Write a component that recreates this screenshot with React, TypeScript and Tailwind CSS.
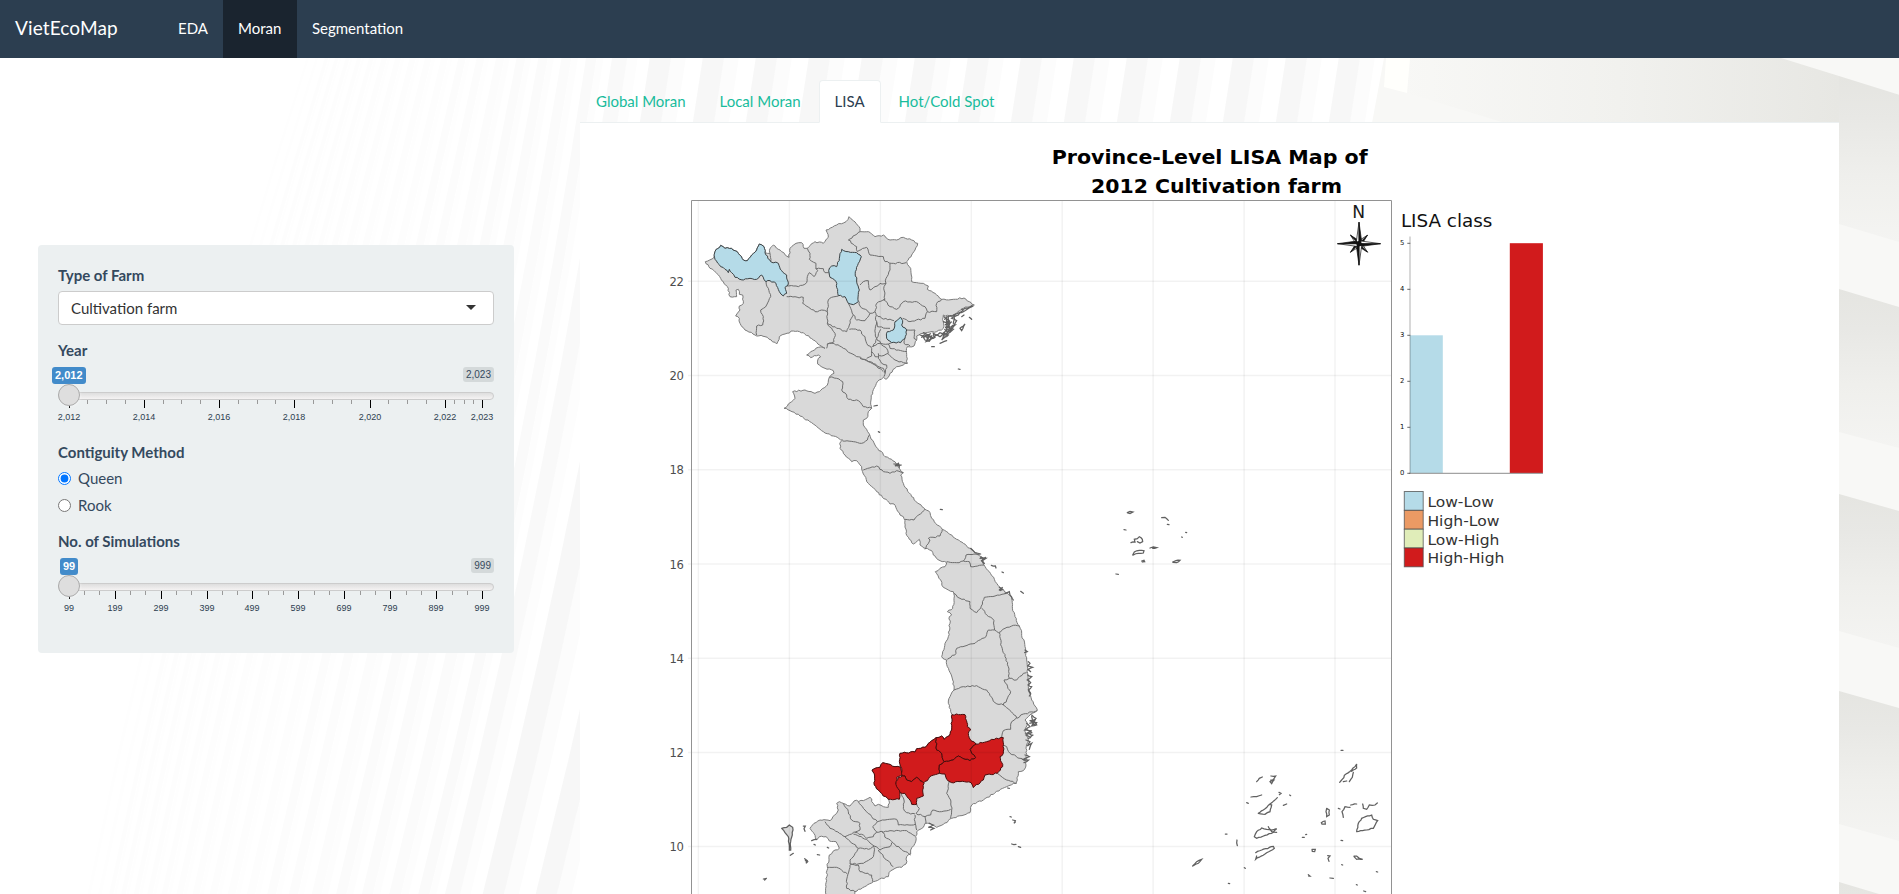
import React from "react";

type Pt = [number, number];

/* Each map sheet is digitised at three units per pixel from its own origin. */
const SHEETS: Record<string, Pt> = {
  A: [690, 200],
  B: [690, 340],
  C: [850, 500],
  D: [740, 690],
  E: [1080, 480],
};

const pts = (sheet: string, s: string): Pt[] => {
  const [ox, oy] = SHEETS[sheet];
  return s
    .trim()
    .split(/\s+/)
    .map((p) => {
      const [x, y] = p.split(",").map(Number);
      return [ox + x / 3, oy + y / 3] as Pt;
    });
};

const hash = (a: number, b: number) => {
  const v = Math.sin(a * 12.9898 + b * 78.233) * 43758.5453;
  return v - Math.floor(v) - 0.5;
};

/* Adds small natural wiggles; shared borders get identical wiggles. */
const rough = (list: Pt[], amp = 1.5): Pt[] => {
  const out: Pt[] = [];
  for (let i = 0; i < list.length - 1; i++) {
    let a = list[i];
    let b = list[i + 1];
    out.push(a);
    const flip = a[0] > b[0] || (a[0] === b[0] && a[1] > b[1]);
    if (flip) [a, b] = [b, a];
    const len = Math.hypot(b[0] - a[0], b[1] - a[1]);
    const n = Math.floor(len / 2);
    const mids: Pt[] = [];
    for (let k = 1; k < n; k++) {
      const t = k / n;
      const d = hash(a[0] + k, b[1] - k) * amp;
      mids.push([
        a[0] + (b[0] - a[0]) * t - ((b[1] - a[1]) / len) * d,
        a[1] + (b[1] - a[1]) * t + ((b[0] - a[0]) / len) * d,
      ]);
    }
    if (flip) mids.reverse();
    out.push(...mids);
  }
  out.push(list[list.length - 1]);
  return out;
};

const toPath = (list: Pt[], close = false) =>
  "M" + list.map((p) => p[0].toFixed(2) + " " + p[1].toFixed(2)).join("L") + (close ? "Z" : "");

const ring = (list: Pt[], amp?: number) => toPath(rough([...list, list[0]], amp), true);

const outline: Pt[] = [
  ...pts("A", "46,185 72,172 75,155 92,136 105,145 125,145 145,160 160,180 172,182 185,165 200,150 208,132 222,140 225,158 240,160 240,145 250,135 275,155 297,172 300,145 318,130 335,128 342,145 352,145 375,125 400,130 415,112 408,90 440,75 468,65 477,50 490,62 510,85 510,95 535,95 555,110 580,105 600,120 620,120 640,112 665,120 683,130 675,150 665,165 650,185 662,205 665,245 700,250 715,258 712,268 735,280 755,298 790,298 822,294 838,305 853,315 820,325 800,340 785,350 760,345 760,385 740,395 700,400 680,408 680,420 672,438 652,440 650,470 652,490 620,500 600,520 588,538"),
  ...pts("B", "580,112 562,125 548,155 543,180 545,205 535,215 530,235 520,240 520,255 533,275 541,290 555,315 585,350 605,358 622,375 630,388 640,398 632,405 640,430 665,470 705,508 720,518 725,535 757,568 800,598 845,628 860,640 875,650 882,675"),
  ...pts("C", "402,195 418,215 440,250 455,268 470,278 485,290 487,320 495,350 508,378 515,400 525,440 530,480 533,520 535,560 545,600 562,630"),
  ...pts("D", "870,75 855,90 862,105 855,125 865,150 858,175 860,205 858,225 850,242 835,245 832,270 828,280 800,290 765,308 730,330 695,345 690,368 635,385 610,403 590,412 570,400 555,400 550,412 530,425 525,460 512,480 512,492 500,500 498,522 485,532 465,535 447,548 445,560 400,575 345,605 330,640 256,640 258,590 262,530 268,495 285,480 298,475 288,455 268,453 258,440 238,440 228,450 222,430 210,415 222,400 240,390 270,392 290,370 295,360 290,340 298,335 330,348 342,333 370,332 390,322 400,340 405,348 415,343 430,350 445,352 447,332 443,325 430,318 415,300 403,285 404,258 396,240 405,235 420,232 428,218 445,222 465,230 482,232 480,190 525,186 530,176 555,172 575,152 590,143 605,138 612,148 628,137 635,120 636,74 632,65 625,40 630,20"),
  ...pts("C", "312,570 308,540 292,500 290,480 275,470 278,455 285,430 295,410 300,370 298,350 305,345 292,335 308,325 312,295 310,275 295,270 280,262 272,240 256,215 270,205 285,200 290,188 270,182 250,165 245,152 225,145 210,135 208,118 190,132 178,118 168,100 165,62"),
  ...pts("B", "640,530 630,525 612,492 600,492 560,455 535,430 520,402 515,380 500,362 485,365 465,345 450,325 452,305 458,300 430,288 400,275 370,252 330,228 300,212 282,205 305,185 315,175 308,155 345,150 375,160 388,155 412,135 418,112 432,100 430,92 405,85 383,72 385,55 392,50 385,45 362,53 350,45 362,35 385,22 400,22 405,25"),
  ...pts("A", "370,420 340,398 310,393 285,402 268,410 260,432 225,410 195,405 165,390 150,370 148,355 137,348 150,330 148,318 160,310 158,285 148,283 145,268 138,270 140,290 120,290 115,265 100,245 80,220 60,205"),
];

const borders: [string, string][] = [
  ["A", "228,245 235,265 242,290 230,315 220,325 212,330 220,350 218,375 200,378 200,405"],
  ["A", "240,160 242,185"],
  ["A", "290,258 325,260 350,248 352,230 358,218 372,230 383,212 378,205"],
  ["A", "352,145 360,160 358,178 378,190 378,207 400,206 405,218 416,218"],
  ["A", "290,290 340,292 338,310 360,325 375,335 395,330 412,335 415,320 415,300 425,292 445,288"],
  ["A", "412,335 412,370 435,400 432,425 412,432 410,445"],
  ["A", "412,370 440,385 470,395 478,375 480,362 490,345 480,320 475,310"],
  ["A", "490,345 500,360 525,362 540,340 510,318 508,305"],
  ["A", "540,340 555,335 560,310 585,298 582,260 588,250 570,250 540,270 535,242 520,245 510,255"],
  ["A", "555,335 560,365 556,400 560,415 550,440"],
  ["A", "478,388 510,390 515,402 525,410 530,430 545,445 545,468 530,475"],
  ["A", "412,432 432,430 460,445 500,470 530,480 555,495 580,515"],
  ["A", "510,475 540,485 580,505 585,520"],
  ["A", "580,298 600,320 620,328 640,305 680,305 705,320 712,335 705,355 660,365 638,355"],
  ["A", "712,335 740,335 740,310 755,298"],
  ["A", "560,345 575,355 612,362"],
  ["A", "560,365 562,380 600,385"],
  ["A", "572,388 560,415 572,430 595,432 605,428"],
  ["A", "650,390 675,390 672,415 680,420"],
  ["A", "645,415 642,430 660,438"],
  ["A", "595,432 600,445 625,450 650,455"],
  ["A", "545,440 570,430 590,445 595,460 575,468 555,470 545,455"],
  ["A", "595,462 615,480 640,488 652,490"],
  ["A", "565,460 565,475 575,490 590,495 582,530"],
  ["A", "510,95 475,120 500,140 502,155 530,142 540,165 580,170 585,185 610,190 648,188"],
  ["A", "600,190 600,210 588,235 588,250"],
  ["B", "418,112 440,115 458,125 455,150 470,165 475,178 505,182 520,200 545,205"],
  ["B", "458,303 490,305 515,310 532,300 538,285"],
  ["B", "520,390 560,378 580,395 600,400 620,392 640,398"],
  ["B", "645,538 672,540 685,525 705,508"],
  ["B", "705,628 720,600 715,595 750,588 757,568"],
  ["B", "770,665 800,668 820,663 838,665 842,680 882,675"],
  ["B", "820,663 828,645 870,642"],
  ["C", "312,280 330,295 360,305 360,325 380,338 392,325 403,292 435,288 470,280"],
  ["C", "395,325 410,345 432,362 434,390 415,390 408,410 375,430 345,438 320,445 318,460 292,478"],
  ["C", "434,390 445,398 465,385 490,376 508,378"],
  ["C", "448,398 455,440 465,470 475,500 478,535 462,540 465,548 482,575 470,600 460,615 435,608 410,570 380,557 340,560 312,570"],
  ["C", "478,535 500,540 520,520 530,518"],
  ["C", "460,615 480,632 498,648 500,655 520,642 562,632"],
  ["C", "498,655 485,665 482,688 460,692 455,712"],
  ["D", "790,165 800,170 810,190 840,205 858,212"],
  ["D", "772,250 800,270 830,280"],
  ["D", "615,258 628,275 620,310 632,330 635,360 632,385"],
  ["D", "530,343 538,355 528,370 555,380 572,375 578,360 605,365 632,358"],
  ["D", "555,380 558,400"],
  ["D", "525,375 525,395 530,420"],
  ["D", "482,305 492,330 490,355 500,368 525,372"],
  ["D", "355,335 375,360 395,380 412,395 435,390 470,388 475,405 520,405 528,402"],
  ["D", "310,340 325,365 335,390 360,400 360,420 335,432 315,440"],
  ["D", "255,395 270,415 315,440 355,475 385,478 402,468"],
  ["D", "412,395 398,410 410,425 400,440 380,445 370,435 345,428"],
  ["D", "410,427 450,422 500,422 525,438"],
  ["D", "425,425 440,445 460,460 480,475 512,495"],
  ["D", "340,432 380,448 402,468 420,480 450,470 455,458"],
  ["D", "402,472 400,500 370,520 330,522 330,510 350,485 355,475"],
  ["D", "415,480 440,510 460,530"],
  ["D", "330,522 355,525 360,545 395,555 398,575"],
  ["D", "262,532 290,532 322,552"],
  ["D", "330,525 322,560 320,595 345,605"],
];

const lowLow: [string, string][] = [
  ["A", "92,136 105,145 125,145 145,160 160,180 172,182 185,165 200,150 208,132 222,140 225,158 242,185 265,190 275,212 290,225 294,255 285,262 290,280 280,288 268,275 258,250 240,242 228,245 215,225 200,238 180,235 160,240 135,232 125,218 118,208 115,218 105,208 92,200 75,178 72,165 75,155"],
  ["A", "455,148 475,155 500,158 514,170 505,190 496,215 500,240 508,270 505,305 490,314 475,310 465,290 445,287 438,245 420,232 416,212 425,198 440,200 448,175"],
  ["A", "632,352 638,362 635,375 650,390 645,415 632,428 605,428 590,415 592,395 610,390 615,365"],
];

const highHigh: string[] = [
  "428,218 445,222 465,230 482,232 487,255 470,262 468,280 480,305 478,328 445,328 443,325 430,318 415,300 403,285 404,258 396,240 405,235 420,232",
  "480,190 525,186 530,176 555,172 575,152 588,143 590,180 605,190 612,215 598,225 598,250 575,257 562,272 550,280 540,272 530,262 515,275 500,270 495,258 487,258 485,235 478,215",
  "487,258 495,258 500,270 515,275 530,262 540,272 552,280 548,300 550,318 530,325 530,343 515,343 505,325 495,310 480,308 470,290 468,275 475,262",
  "588,143 605,138 612,148 628,137 635,120 636,74 675,74 682,110 692,120 685,130 690,148 708,162 690,178 695,190 707,203 690,212 675,208 655,198 640,210 612,215 605,190 590,180",
  "708,162 740,155 755,148 790,143 790,190 780,200 788,230 772,250 735,255 730,270 700,293 693,278 660,275 635,278 620,268 615,252 598,250 598,225 612,215 640,210 655,198 675,208 690,212 707,203 695,190 690,178",
];

const isles: [string, string][] = [
  ["D", "125,415 140,412 148,405 158,412 157,435 152,455 152,480 148,480 145,440 135,428 125,415"],
  ["A", "690,405 705,410 720,402 712,420 735,412 730,400 750,410 765,395 755,420 775,405 760,400"],
  ["A", "700,398 715,406 708,425 722,418 738,406 750,398 762,406 785,385"],
  ["A", "695,412 705,404 712,414 725,408 718,424 705,420 700,412 712,404 722,412"],
  ["A", "762,350 775,360 765,375 785,365 770,385 795,375 780,395 775,350 795,345 790,370"],
  ["A", "760,365 778,372 768,392 788,380 800,362 785,355 805,345 820,330"],
  ["A", "764,358 772,348 770,368 780,362 766,384 776,378 784,392 772,396 764,388"],
  ["A", "770,380 790,388 775,400 760,415"],
  ["A", "810,385 820,378 825,372 815,392 810,385"],
  ["A", "815,350 822,345"],
  ["A", "838,352 845,358"],
  ["A", "725,440 733,440"],
  ["A", "750,430 770,422"],
  ["A", "805,507 810,508"],
  ["A", "790,345 820,335 850,318 815,328"],
  ["B", "552,198 562,196"],
  ["B", "565,275 569,277"],
  ["B", "612,372 635,375 615,378 625,370 628,382"],
  ["B", "751,508 757,509"],
  ["B", "872,652 888,655 875,662 883,670"],
  ["C", "362,145 375,158 392,162"],
  ["C", "390,175 408,172 395,182 402,190"],
  ["C", "424,196 436,198 438,204"],
  ["C", "456,216 460,218"],
  ["C", "448,262 458,268 450,272 458,262 448,270"],
  ["C", "465,280 478,275 480,285 490,300"],
  ["C", "512,274 520,280"],
  ["C", "525,450 532,455 524,458"],
  ["C", "535,485 540,490 533,498 548,502 534,508 542,515"],
  ["C", "533,525 545,530 532,540 542,548 534,555 545,560 535,570 542,580"],
  ["C", "545,645 558,655 545,665 560,668 550,675 555,660 540,662"],
  ["C", "530,670 540,680 525,690 545,692 530,700 550,705 535,715"],
  ["D", "875,80 880,95 868,100 885,98 890,105 875,108 882,90"],
  ["D", "862,120 875,128 858,135 868,140"],
  ["D", "858,150 870,155 862,168 875,160 868,178"],
  ["D", "855,195 868,200 850,208 866,210 852,218"],
  ["D", "866,0 872,12 868,18"],
  ["D", "568,400 580,405 565,412 582,415 572,420"],
  ["D", "190,408 196,408 192,416 195,424"],
  ["D", "222,463 226,465"],
  ["D", "215,452 230,448"],
  ["D", "262,472 266,474"],
  ["D", "232,494 239,495"],
  ["D", "194,506 202,512 198,520 203,515 196,512"],
  ["D", "70,567 80,565 74,570"],
  ["D", "151,496 160,490"],
  ["D", "818,390 826,392 822,400 826,396"],
  ["D", "810,380 814,381"],
  ["D", "815,462 828,463"],
  ["D", "835,470 842,472"],
  ["D", "803,294 808,295"],
  ["E", "142,98 150,94 159,96 150,101 143,99"],
  ["E", "132,149 138,150"],
  ["E", "245,113 255,112 265,121"],
  ["E", "262,133 267,134"],
  ["E", "317,157 320,158"],
  ["E", "305,171 307,172"],
  ["E", "153,188 165,186 163,178 172,176 178,170 187,178 188,185 180,189 172,185"],
  ["E", "158,225 163,216 178,211 192,212 190,219 175,220 160,225"],
  ["E", "210,204 220,201 230,203 218,205"],
  ["E", "185,243 192,241 194,245 187,246"],
  ["E", "278,246 288,242 300,241 290,248 279,247"],
  ["E", "108,282 115,283"],
  ["E", "783,811 789,811"],
  ["E", "779,907 798,882 825,860 830,852 830,864 815,874"],
  ["E", "820,877 817,892 808,905"],
  ["E", "790,905 800,903"],
  ["E", "530,905 538,895 547,891"],
  ["E", "573,888 587,888 582,896 570,905 575,911 582,900 572,900"],
  ["E", "513,951 530,950 545,945"],
  ["E", "500,968 505,970"],
  ["E", "535,1000 550,990 568,973 575,975 570,995 555,1003 535,1000"],
  ["E", "570,972 592,953"],
  ["E", "597,937 603,940 598,944"],
  ["E", "629,945 632,947"],
  ["E", "610,976 620,972"],
  ["E", "523,1070 530,1055 545,1044 560,1048 575,1050 590,1046 580,1057 555,1066 530,1075 523,1070"],
  ["E", "565,1040 575,1055 590,1057"],
  ["E", "527,1118 545,1110 580,1099 583,1105 560,1118 527,1138 530,1128"],
  ["E", "436,1062 441,1062"],
  ["E", "471,1080 472,1097"],
  ["E", "338,1158 350,1145 365,1138 355,1150 340,1157"],
  ["E", "493,1163 496,1165"],
  ["E", "445,1210 449,1211"],
  ["E", "740,985 748,990 748,1005 740,1010 738,995 740,985"],
  ["E", "724,1028 735,1023 736,1032 726,1032 724,1028"],
  ["E", "667,1072 673,1072"],
  ["E", "677,1064 680,1063"],
  ["E", "775,985 780,987"],
  ["E", "790,1012 786,995 795,980 810,982"],
  ["E", "812,975 830,972"],
  ["E", "848,972 850,985 860,988 868,975 885,975 892,969"],
  ["E", "830,1055 835,1030 845,1015 875,1005 880,1018 893,1022 880,1045 860,1050 830,1055"],
  ["E", "783,1081 788,1082"],
  ["E", "696,1108 706,1108 704,1115 697,1114 696,1108"],
  ["E", "743,1127 750,1128 744,1135 747,1144"],
  ["E", "822,1128 830,1128 838,1135 848,1138 830,1138 822,1130"],
  ["E", "785,1154 788,1155"],
  ["E", "685,1184 690,1188 686,1188"],
  ["E", "750,1194 760,1195"],
  ["E", "889,1175 893,1176"],
  ["E", "829,1214 832,1215"],
  ["E", "851,1233 857,1235"],
];

/* ---------- Page backdrop ---------- */

const fanEdge = (t: number, y: number) => {
  const d = y - 58;
  const k = (590 - t) / 280;
  const a = 0.148 + Math.max(k, 0) * 0.17;
  const b = 0.000062 - Math.max(k, 0) * 0.00013;
  return t - a * d - b * d * d;
};

const fanStripe = (t: number, w: number) => {
  const ys = [58, 160, 260, 360, 460, 560, 660, 760, 894];
  const l = ys.map((y) => [fanEdge(t, y), y] as Pt);
  const r = ys.map((y) => [fanEdge(t + w, y), y] as Pt).reverse();
  return toPath([...l, ...r], true);
};

const stripes = (() => {
  const list: { t: number; w: number; o: number }[] = [];
  let t = 306;
  while (t < 1370) {
    const p = Math.min((t - 306) / 280, 1);
    const q = Math.min(Math.max((t - 586) / 60, 0), 1);
    const gap = 9 + p * 17 + q * 27;
    const o = 0.005 + p * 0.018 + q * 0.017;
    list.push({ t, w: gap * 0.4, o });
    list.push({ t: t + gap * 0.4, w: gap * 0.28, o: o * 0.35 });
    t += gap;
  }
  return list;
})();

const shades: number[][] = [
  [76, 94.7, 224, 242],
  [289, 307, 432, 448],
  [494, 511, 631, 648],
  [691, 708, 824, 841],
  [882, 900, 1010, 1030],
];

function Backdrop() {
  return (
    <svg className="absolute inset-0 -z-10" width="1899" height="894" viewBox="0 0 1899 894" aria-hidden="true">
      <defs>
        <linearGradient id="shade" x1="0" y1="0" x2="0" y2="1">
          <stop offset="0" stopColor="#e5e5e1" />
          <stop offset="0.25" stopColor="#e8e8e5" />
          <stop offset="0.6" stopColor="#efefec" />
          <stop offset="1" stopColor="#f4f4f2" />
        </linearGradient>
        <linearGradient id="sweep" gradientUnits="userSpaceOnUse" x1="1400" y1="0" x2="1839" y2="0">
          <stop offset="0" stopColor="#f8f8f6" />
          <stop offset="0.5" stopColor="#f1f1ee" />
          <stop offset="1" stopColor="#e7e7e3" />
        </linearGradient>
      </defs>
      <rect width="1899" height="894" fill="#ffffff" />
      {stripes.map((s) => (
        <path key={s.t} d={fanStripe(s.t, s.w)} fill="#3c3c32" fillOpacity={s.o} />
      ))}
      <path d="M1384 58H1899V894H1839V123H1372Z" fill="#f8f8f6" />
      <path d="M1410 58H1781L1839 76V123H1505L1407 93Z" fill="url(#sweep)" />
      <path d="M1386 58H1410L1407 93L1384 87Z" fill="#fffffc" />
      {shades.map((s, i) => (
        <path
          key={i}
          d={"M1839 " + s[0] + "L1899 " + s[1] + "V" + s[3] + "L1839 " + s[2] + "Z"}
          fill="url(#shade)"
        />
      ))}
    </svg>
  );
}

/* ---------- Sidebar controls ---------- */

type Tick = { x: number; label?: string };

function Slider({ value, max, valueLeft, ticks }: { value: string; max: string; valueLeft: string; ticks: Tick[] }) {
  return (
    <div className="relative h-[56px] font-['Liberation_Sans',Arial,sans-serif]">
      <span
        className={
          "absolute top-0 h-[17px] rounded-[3px] bg-[#428bca] px-[3px] text-[11px] leading-[17px] font-bold text-white " + valueLeft
        }
      >
        {value}
      </span>
      <span className="absolute top-0 right-0 h-[15px] rounded-[3px] bg-[#d4d9da] px-[3px] text-[10px] leading-[15px] text-[#34495e]">
        {max}
      </span>
      <div className="absolute top-[25px] left-0 h-2 w-full rounded-lg border border-[#cccccc] bg-linear-to-b from-[#dedede] to-[#f5f3f3]" />
      {ticks.map((t) => (
        <React.Fragment key={t.x}>
          <span
            className={"absolute top-[33px] w-px " + (t.label ? "h-2 bg-black" : "h-1 bg-[#999999]")}
            style={{ left: t.x }}
          />
          {t.label && (
            <span
              className="absolute top-[45px] -translate-x-1/2 text-[9px] leading-[11px] whitespace-nowrap text-[#2c3e50]"
              style={{ left: t.x }}
            >
              {t.label}
            </span>
          )}
        </React.Fragment>
      ))}
      <span className="absolute top-[17px] left-0 size-[22px] rounded-full border border-[#ababab] bg-[#dedede] shadow-[1px_1px_3px_rgba(255,255,255,0.3)]" />
    </div>
  );
}

const tickList = (major: [number, string][], minor: number[]): Tick[] => [
  ...major.map(([x, label]) => ({ x: Math.floor((x - 84) / 3), label })),
  ...minor.map((x) => ({ x: Math.floor((x - 84) / 3) })),
];

const yearTicks = tickList(
  [[118, "2,012"], [343, "2,014"], [568, "2,016"], [793, "2,018"], [1021, "2,020"], [1246, "2,022"], [1357, "2,023"]],
  [172, 229, 286, 400, 454, 511, 625, 682, 736, 850, 907, 964, 1075, 1132, 1189, 1273, 1303, 1330],
);
const simTicks = tickList(
  [[118, "99"], [256, "199"], [394, "299"], [532, "399"], [667, "499"], [805, "599"], [943, "699"], [1081, "799"], [1219, "899"], [1357, "999"]],
  [163, 208, 301, 346, 439, 484, 577, 622, 715, 760, 853, 898, 991, 1036, 1129, 1174, 1267, 1312],
);

function Sidebar() {
  return (
    <aside className="mt-[187px] ml-[38px] h-[408px] w-[476px] shrink-0 rounded bg-[#ecf0f1] px-5 pt-5">
      <div className="pb-[5px] font-bold leading-[21px]">Type of Farm</div>
      <div className="flex h-[34px] items-center justify-between rounded border border-[#cccccc] bg-white pr-[17px] pl-3 text-[#333333]">
        <span>Cultivation farm</span>
        <span className="mb-[2px] h-0 w-0 border-x-[5px] border-t-[5px] border-x-transparent border-t-[#333333]" />
      </div>
      <div className="mt-[15px] pb-[6px] font-bold leading-[21px]">Year</div>
      <Slider value="2,012" max="2,023" valueLeft="-left-[6px]" ticks={yearTicks} />
      <div className="mt-[19px] font-bold leading-[21px]">Contiguity Method</div>
      <label className="mt-[5px] flex h-[21px] items-center gap-[7px]">
        <input type="radio" name="contiguity" defaultChecked className="m-0 size-[13px]" />
        Queen
      </label>
      <label className="mt-[6px] flex h-[21px] items-center gap-[7px]">
        <input type="radio" name="contiguity" className="m-0 size-[13px]" />
        Rook
      </label>
      <div className="mt-[15px] pb-[6px] font-bold leading-[21px]">No. of Simulations</div>
      <Slider value="99" max="999" valueLeft="left-[2px]" ticks={simTicks} />
    </aside>
  );
}

/* ---------- LISA chart ---------- */

const meridians = [698.4, 789.4, 880.4, 971.3, 1062.2, 1153.1, 1244.1, 1335];
const parallels: [number, string][] = [
  [281.3, "22"], [375.5, "20"], [469.7, "18"], [563.9, "16"], [658.2, "14"], [752.4, "12"], [846.5, "10"],
];
const legend: [string, string, number, number][] = [
  ["#b5dbe8", "Low-Low", 491.5, 66.5],
  ["#eb9a64", "High-Low", 510.4, 72],
  ["#e0edb9", "Low-High", 529.2, 72],
  ["#d11b1c", "High-High", 548, 77],
];

function Compass() {
  const c: Pt = [1359, 243.7];
  const arm = (deg: number, len: number, half: number) => (
    <g key={deg} transform={"translate(" + c[0] + " " + c[1] + ") rotate(" + deg + ")"}>
      <path d={"M0 0L" + -half + " " + -half + "L0 " + -len + "Z"} fill="#ffffff" stroke="#111111" strokeWidth="0.7" />
      <path d={"M0 0L" + half + " " + -half + "L0 " + -len + "Z"} fill="#111111" stroke="#111111" strokeWidth="0.7" />
    </g>
  );
  return (
    <g>
      {[45, 135, 225, 315].map((d) => arm(d, 12, 2.2))}
      {[0, 90, 180, 270].map((d) => arm(d, 21.5, 2.6))}
      <circle cx={c[0]} cy={c[1]} r="2.6" fill="#111111" />
    </g>
  );
}

function LisaChart() {
  return (
    <svg
      className="block font-['DejaVu_Sans',sans-serif]"
      width="1259"
      height="771"
      viewBox="580 123 1259 771"
      role="img"
      aria-label="Province-level LISA map"
    >
      <g fontSize="20.2" fontWeight="700" fill="#000000" lengthAdjust="spacingAndGlyphs">
        <text x="1051.7" y="163.7" textLength="316" lengthAdjust="spacingAndGlyphs">Province-Level LISA Map of</text>
        <text x="1091" y="192.8" textLength="251" lengthAdjust="spacingAndGlyphs">2012 Cultivation farm</text>
      </g>

      <path d={ring(outline)} fill="#d9d9d9" stroke="#7c7c7c" strokeWidth="1" />
      <g fill="none" stroke="#6e6e6e" strokeWidth="1" strokeLinejoin="round">
        {borders.map(([s, d], i) => (
          <path key={i} d={toPath(rough(pts(s, d)))} />
        ))}
      </g>
      <g fill="none" stroke="#606060" strokeWidth="1.25" strokeLinecap="round">
        {isles.map(([s, d], i) => (
          <path key={i} d={toPath(rough(pts(s, d), 1))} fill={i === 0 ? "#d9d9d9" : "none"} />
        ))}
      </g>
      <g stroke="#3c4346" strokeWidth="1" fill="#b5dbe8">
        {lowLow.map(([s, d], i) => (
          <path key={i} d={ring(pts(s, d))} />
        ))}
      </g>
      <g stroke="#4a0d0d" strokeWidth="1" fill="#d11b1c">
        {highHigh.map((d, i) => (
          <path key={i} d={ring(pts("D", d))} />
        ))}
      </g>

      <g stroke="#000000" strokeOpacity="0.05">
        {meridians.map((x) => (
          <path key={x} d={"M" + x + " 201V894"} strokeWidth="1.5" />
        ))}
        {parallels.map(([y]) => (
          <path key={y} d={"M688 " + y + "H1391"} strokeWidth="1.5" />
        ))}
      </g>
      <path d="M691.5 900V200.5H1391.5V900" fill="none" stroke="#929292" strokeWidth="1" />
      <g fontSize="11.6" fill="#4d4d4d" textAnchor="end">
        {parallels.map(([y, label]) => (
          <text key={label} x="684" y={y + 4.6} textLength="14.4">{label}</text>
        ))}
      </g>

      <text x="1358.7" y="218" fontSize="17.2" fill="#1a1a1a" textAnchor="middle">N</text>
      <Compass />

      <text x="1400.9" y="226.8" fontSize="17" fill="#111111" textLength="91.5" lengthAdjust="spacingAndGlyphs">LISA class</text>
      <rect x="1410" y="335.3" width="32.8" height="137.7" fill="#b5dbe8" />
      <rect x="1509.8" y="243.2" width="33.1" height="229.8" fill="#d11b1c" />
      <path d="M1410 236.5V473" stroke="#000000" strokeOpacity="0.22" strokeWidth="1.4" />
      <path d="M1409 473.3H1543" stroke="#8c8c8c" strokeWidth="1" />
      {[0, 1, 2, 3, 4, 5].map((n) => (
        <g key={n}>
          <path d={"M1407.3 " + (473.3 - n * 46) + "h3"} stroke="#555555" strokeWidth="0.9" />
          <text x="1404.4" y={475.4 - n * 46} fontSize="6.8" fill="#111111" textAnchor="end">{n}</text>
        </g>
      ))}

      {legend.map(([color, label, y, w]) => (
        <g key={label}>
          <rect x="1404.3" y={y} width="18.9" height="18.8" fill={color} stroke="#4c4c4c" strokeOpacity="0.75" strokeWidth="1" />
          <text x="1427.4" y={y + 15.3} fontSize="14.4" fill="#333333" textLength={w} lengthAdjust="spacingAndGlyphs">{label}</text>
        </g>
      ))}
    </svg>
  );
}

const tabs = ["Global Moran", "Local Moran", "LISA", "Hot/Cold Spot"];

export default function App() {
  return (
    <div className="relative isolate flex h-screen w-full flex-col overflow-hidden font-['Lato',sans-serif] text-[15px] text-[#34495e]">
      <Backdrop />
      <nav className="flex h-[58px] shrink-0 bg-[#2c3e50] text-white">
        <span className="flex w-[163px] items-center pb-[2px] pl-[15px] text-[19px] tracking-[0.12px]">VietEcoMap</span>
        <span className="flex items-center px-[15px] pb-[1px]">EDA</span>
        <span className="flex w-[74px] items-center bg-[#1a242f] pb-[1px] pl-[15px]">Moran</span>
        <span className="flex items-center px-[15px] pb-[1px]">Segmentation</span>
      </nav>
      <div className="flex min-h-0 flex-1">
        <Sidebar />
        <main className="ml-[66px] w-[1259px] shrink-0 pt-[22px]">
          <div className="flex h-[43px] gap-[2px] border-b border-[#ecf0f1]">
            {tabs.map((t) => (
              <span
                key={t}
                className={
                  "h-[43px] rounded-t border px-[15px] pt-[10px] leading-[21px] " +
                  (t === "LISA"
                    ? "border-[#ecf0f1] border-b-white bg-white text-[#2c3e50]"
                    : "border-transparent text-[#18bc9c]")
                }
              >
                {t}
              </span>
            ))}
          </div>
          <div className="h-[771px] bg-white">
            <LisaChart />
          </div>
        </main>
      </div>
    </div>
  );
}
